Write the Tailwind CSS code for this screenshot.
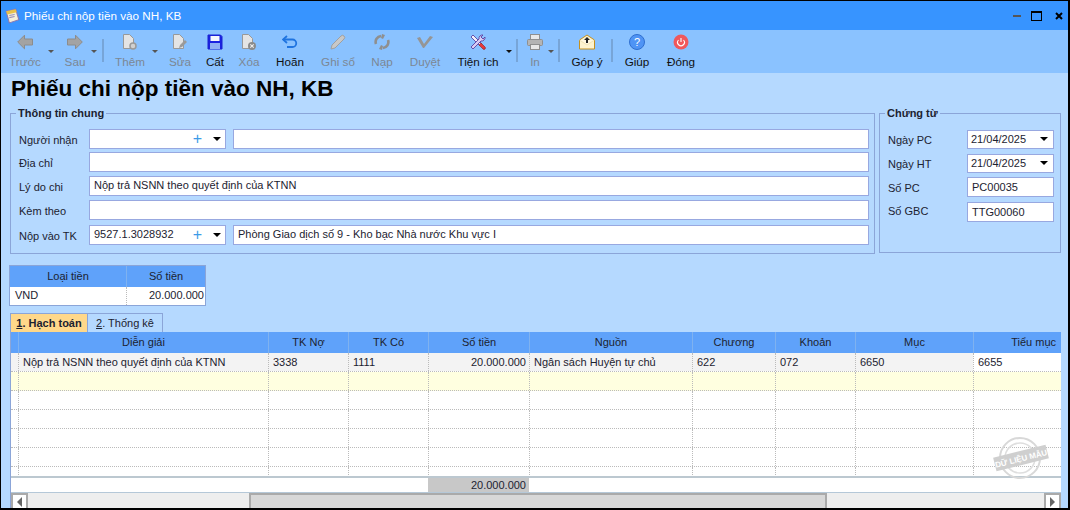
<!DOCTYPE html>
<html lang="vi">
<head>
  <meta charset="UTF-8">
  <meta name="viewport" content="width=device-width, initial-scale=1.0">
  <title>Phiếu chi nộp tiền vào NH, KB</title>
  <script src="https://cdn.jsdelivr.net/npm/@tailwindcss/browser@4"></script>
</head>
<body class="overflow-hidden">
  <div class="w-[1070px] h-[510px] flex flex-col bg-[#b5d9ff] border border-black border-r-2 border-b-2 font-['Liberation_Sans',sans-serif] text-[11px] text-[#1c2230] overflow-hidden relative">

    <!-- title bar -->
    <div class="h-[29px] shrink-0 bg-[#3794ff] flex items-center pl-[3px] text-white text-[11.7px]">
      <svg class="w-[17px] h-[17px] mr-[3px]" viewBox="0 0 16 16"><path d="M2 4l9-2 3 10-9 3z" fill="#f4efd8" stroke="#8a78b0"/><path d="M2 4l9-2 1 3-9 2z" fill="#e8c24a"/><path d="M5 8l5-1M5 10l5-1" stroke="#9a90b8"/></svg>
      <span>Phiếu chi nộp tiền vào NH, KB</span>
      <div class="ml-auto flex items-center">
        <div class="w-[8px] h-[2px] bg-[#555] mr-[10px]"></div>
        <div class="w-[11px] h-[10px] border border-black border-t-2 mr-[13px]"></div>
        <svg class="w-[8px] h-[8px] mr-[5px]" viewBox="0 0 8 8"><path d="M1 1l6 6M7 1l-6 6" stroke="#000" stroke-width="2"/></svg>
      </div>
    </div>

    <!-- toolbar -->
    <div class="h-[43px] shrink-0 bg-[#8ac2ff] flex pl-[3px] text-[11.7px]">
      <div class="w-[42px] flex flex-col items-center pt-[4px] text-[#7c8794]">
        <svg class="w-[16px] h-[16px]" viewBox="0 0 16 16"><path d="M.7 8L7.5 1.2V5h8v6h-8v3.8z" fill="#a3a3a3" stroke="#8c8c8c"/></svg>
        <span class="mt-[3px]">Trước</span>
      </div>
      <div class="w-0 h-0 mt-[20px] ml-[2px] mr-[1px] border-x-[3px] border-t-[3px] border-x-transparent border-t-[#555]"></div>
      <div class="w-[36px] ml-[2px] flex flex-col items-center pt-[4px] text-[#7c8794]">
        <svg class="w-[16px] h-[16px]" viewBox="0 0 16 16"><path d="M15.3 8L8.5 1.2V5h-8v6h8v3.8z" fill="#a3a3a3" stroke="#8c8c8c"/></svg>
        <span class="mt-[3px]">Sau</span>
      </div>
      <div class="w-0 h-0 mt-[20px] border-x-[3px] border-t-[3px] border-x-transparent border-t-[#555] -ml-[2px]"></div>
      <div class="w-[2px] h-[23px] mt-[9px] ml-[5px] bg-[#77a5d8]"></div>
      <div class="w-[40px] ml-[6px] flex flex-col items-center pt-[4px] text-[#7c8794]">
        <svg class="w-[16px] h-[16px]" viewBox="0 0 16 16"><path d="M1.5.5h6l4 4v10h-10z" fill="#e4e4e4" stroke="#999"/><circle cx="11" cy="12" r="3" fill="#d0d0d0" stroke="#999" stroke-width="1.5"/></svg>
        <span class="mt-[3px]">Thêm</span>
      </div>
      <div class="w-0 h-0 mt-[20px] ml-[2px] border-x-[3px] border-t-[3px] border-x-transparent border-t-[#555]"></div>
      <div class="w-[32px] ml-[6px] flex flex-col items-center pt-[4px] text-[#7c8794]">
        <svg class="w-[16px] h-[16px]" viewBox="0 0 16 16"><path d="M1.5.5h6l4 4v10h-10z" fill="#e4e4e4" stroke="#999"/><path d="M7 14l1-3 5-5 2 2-5 5z" fill="#9a9a9a"/></svg>
        <span class="mt-[3px]">Sửa</span>
      </div>
      <div class="w-[32px] ml-[3px] flex flex-col items-center pt-[4px] text-[#111]">
        <svg class="w-[16px] h-[16px]" viewBox="0 0 16 16"><path d="M1 1h12.5L15 2.5V15H1z" fill="#1a22e0" stroke="#1a22d0"/><rect x="3.5" y="2" width="9" height="5" fill="#f4f6fc"/><rect x="3" y="9" width="10" height="6" fill="#8fb0f5"/></svg>
        <span class="mt-[3px]">Cất</span>
      </div>
      <div class="w-[32px] ml-[2px] flex flex-col items-center pt-[4px] text-[#7c8794]">
        <svg class="w-[16px] h-[16px]" viewBox="0 0 16 16"><path d="M1.5.5h6l4 4v10h-10z" fill="#e4e4e4" stroke="#999"/><circle cx="11" cy="12" r="4" fill="#8a8a8a"/><path d="M9.3 10.3l3.4 3.4m0-3.4l-3.4 3.4" stroke="#eee" stroke-width="1.1"/></svg>
        <span class="mt-[3px]">Xóa</span>
      </div>
      <div class="w-[40px] ml-[5px] flex flex-col items-center pt-[4px] text-[#111]">
        <svg class="w-[16px] h-[16px]" viewBox="0 0 16 16"><path d="M5 2L1 5.5 5 9" fill="none" stroke="#1f74e0" stroke-width="1.8"/><path d="M1 5.5h9.5a3.7 3.7 0 0 1 0 7.5H5" fill="none" stroke="#1f74e0" stroke-width="1.8"/></svg>
        <span class="mt-[3px]">Hoãn</span>
      </div>
      <div class="w-[40px] ml-[8px] flex flex-col items-center pt-[4px] text-[#7c8794]">
        <svg class="w-[16px] h-[16px]" viewBox="0 0 16 16"><path d="M1 15l1-4 9-9a2 2 0 0 1 3 3l-9 9z" fill="#c8c8c8" stroke="#a0a0a0"/></svg>
        <span class="mt-[3px]">Ghi sổ</span>
      </div>
      <div class="w-[36px] ml-[6px] flex flex-col items-center pt-[4px] text-[#7c8794]">
        <svg class="w-[16px] h-[16px]" viewBox="0 0 16 16"><path d="M2 10a6 6 0 0 1 5-8M14 6a6 6 0 0 1-5 8" fill="none" stroke="#8f8f8f" stroke-width="2.6"/><path d="M8 0l3 1-2 4-2-1zM8 16l-3-1 2-4 2 1z" fill="#8f8f8f"/></svg>
        <span class="mt-[3px]">Nạp</span>
      </div>
      <div class="w-[40px] ml-[5px] flex flex-col items-center pt-[4px] text-[#7c8794]">
        <svg class="w-[16px] h-[16px]" viewBox="0 0 16 16"><path d="M0 4l3-1 4 7 6-8 3 1-9 11h-1z" fill="#959595"/></svg>
        <span class="mt-[3px]">Duyệt</span>
      </div>
      <div class="w-[50px] ml-[8px] flex flex-col items-center pt-[4px] text-[#111]">
        <svg class="w-[16px] h-[16px]" viewBox="0 0 16 16"><path d="M1 3l2-2 9 9-2 2z" fill="#f2f0fa" stroke="#5a3fa0" stroke-width=".9"/><path d="M9 11l2-2 4 4a1.4 1.4 0 0 1-2 2z" fill="#e8383c" stroke="#8a1c1c" stroke-width=".6"/><path d="M1 13L9 5a3.5 3.5 0 0 1 4-4l-2 2 2 2 2-2a3.5 3.5 0 0 1-4 4l-8 8z" fill="#d8ccf4" stroke="#5a3fa0" stroke-width=".9"/></svg>
        <span class="mt-[3px]">Tiện ích</span>
      </div>
      <div class="w-0 h-0 mt-[20px] ml-[3px] border-x-[3px] border-t-[3px] border-x-transparent border-t-[#111]"></div>
      <div class="w-[2px] h-[23px] mt-[9px] ml-[4px] bg-[#77a5d8]"></div>
      <div class="w-[24px] ml-[5px] flex flex-col items-center pt-[4px] text-[#7c8794]">
        <svg class="w-[16px] h-[16px]" viewBox="0 0 16 16"><rect x="3.5" y=".5" width="9" height="5" fill="#e8e8e8" stroke="#8f8f8f"/><rect x=".5" y="5.5" width="15" height="6" rx="1" fill="#b4b4b4" stroke="#8f8f8f"/><rect x="3.5" y="10.5" width="9" height="5" fill="#e8e8e8" stroke="#8f8f8f"/></svg>
        <span class="mt-[3px]">In</span>
      </div>
      <div class="w-0 h-0 mt-[20px] ml-[1px] border-x-[3px] border-t-[3px] border-x-transparent border-t-[#555]"></div>
      <div class="w-[2px] h-[23px] mt-[9px] ml-[4px] bg-[#77a5d8]"></div>
      <div class="w-[40px] ml-[7px] flex flex-col items-center pt-[4px] text-[#111]">
        <svg class="w-[16px] h-[16px]" viewBox="0 0 16 16"><path d="M.5 6L8 1l7.5 5v9H.5z" fill="#fdf3cf" stroke="#c49020"/><path d="M.5 6L8 11l7.5-5" fill="#fff8e0" stroke="#e8d8a0" stroke-width=".6"/><path d="M8 3l3 3H9v3H7V6H5z" fill="#222"/></svg>
        <span class="mt-[3px]">Góp ý</span>
      </div>
      <div class="w-[2px] h-[23px] mt-[9px] ml-[4px] bg-[#77a5d8]"></div>
      <div class="w-[36px] ml-[6px] flex flex-col items-center pt-[4px] text-[#111]">
        <div class="w-[16px] h-[16px] rounded-full bg-[#4f94f5] border border-[#2f6fd0] text-white text-[11px] leading-[14px] text-center">?</div>
        <span class="mt-[3px]">Giúp</span>
      </div>
      <div class="w-[40px] ml-[6px] flex flex-col items-center pt-[4px] text-[#111]">
        <svg class="w-[16px] h-[16px]" viewBox="0 0 16 16"><circle cx="8" cy="8" r="7.5" fill="#f0585c"/><path d="M5.5 6a3.4 3.4 0 1 0 5 0M8 4v4" fill="none" stroke="#fff" stroke-width="1.1"/></svg>
        <span class="mt-[3px]">Đóng</span>
      </div>
    </div>

    <!-- heading -->
    <h1 class="h-[34px] shrink-0 pl-[10px] font-bold text-[22.5px] leading-[32px] text-black">Phiếu chi nộp tiền vào NH, KB</h1>

    <!-- group boxes -->
    <div class="flex h-[148px] shrink-0 pl-[9px]">
      <fieldset class="w-[865px] h-[148px] border border-[#8ba5d8] pl-[8px] pr-[5px] pt-[8px] -mt-[1px]">
        <legend class="px-[2px] -ml-[3px] font-bold leading-[14px]">Thông tin chung</legend>
        <div class="flex items-center h-[21px] mb-[2px]">
          <label class="w-[70px] pt-[3px]">Người nhận</label>
          <div class="w-[137px] h-[20px] bg-white border border-[#98a8e0] flex items-center pl-[4px]">
            <span class="ml-auto text-[16px] text-[#3d9be8] mr-[11px]">+</span>
            <div class="w-0 h-0 mr-[4px] border-x-[4px] border-t-[4px] border-x-transparent border-t-black"></div>
          </div>
          <div class="w-[636px] h-[20px] ml-[7px] bg-white border border-[#98a8e0]"></div>
        </div>
        <div class="flex items-center h-[22px] mb-[2px]">
          <label class="w-[70px] pt-[3px]">Địa chỉ</label>
          <div class="w-[780px] h-[20px] bg-white border border-[#98a8e0]"></div>
        </div>
        <div class="flex items-center h-[22px] mb-[1px]">
          <label class="w-[70px] pt-[3px]">Lý do chi</label>
          <div class="w-[780px] h-[20px] bg-white border border-[#98a8e0] pl-[4px] leading-[17px]">Nộp trả NSNN theo quyết định của KTNN</div>
        </div>
        <div class="flex items-center h-[23px] mb-[3px]">
          <label class="w-[70px] pt-[3px]">Kèm theo</label>
          <div class="w-[780px] h-[20px] bg-white border border-[#98a8e0]"></div>
        </div>
        <div class="flex items-center h-[21px]">
          <label class="w-[70px] pt-[3px]">Nộp vào TK</label>
          <div class="w-[137px] h-[20px] bg-white border border-[#98a8e0] flex items-center pl-[4px]">
            <span>9527.1.3028932</span>
            <span class="ml-auto text-[16px] text-[#3d9be8] mr-[11px]">+</span>
            <div class="w-0 h-0 mr-[4px] border-x-[4px] border-t-[4px] border-x-transparent border-t-black"></div>
          </div>
          <div class="w-[636px] h-[20px] ml-[7px] bg-white border border-[#98a8e0] pl-[4px] leading-[17px]">Phòng Giao dịch số 9 - Kho bạc Nhà nước Khu vực I</div>
        </div>
      </fieldset>
      <fieldset class="w-[182px] h-[147px] ml-[4px] border border-[#8ba5d8] pl-[8px] pr-[6px] pt-[7px] -mt-[1px]">
        <legend class="px-[2px] -ml-[3px] font-bold leading-[14px]">Chứng từ</legend>
        <div class="flex items-center h-[24px]">
          <label class="w-[79px] pt-[2px]">Ngày PC</label>
          <div class="w-[87px] h-[19px] bg-white border border-[#98a8e0] flex items-center pl-[3px]">
            <span>21/04/2025</span>
            <div class="w-0 h-0 ml-auto mr-[5px] border-x-[4px] border-t-[4px] border-x-transparent border-t-black"></div>
          </div>
        </div>
        <div class="flex items-center h-[24px]">
          <label class="w-[79px] pt-[2px]">Ngày HT</label>
          <div class="w-[87px] h-[19px] bg-white border border-[#98a8e0] flex items-center pl-[3px]">
            <span>21/04/2025</span>
            <div class="w-0 h-0 ml-auto mr-[5px] border-x-[4px] border-t-[4px] border-x-transparent border-t-black"></div>
          </div>
        </div>
        <div class="flex items-center h-[24px]">
          <label class="w-[79px] pt-[2px]">Số PC</label>
          <div class="w-[87px] h-[20px] bg-white border border-[#98a8e0] pl-[4px] leading-[18px]">PC00035</div>
        </div>
        <div class="flex items-center h-[25px]">
          <label class="w-[79px]">Số GBC</label>
          <div class="w-[87px] h-[20px] bg-white border border-[#98a8e0] pl-[4px] leading-[18px]">TTG00060</div>
        </div>
      </fieldset>
    </div>

    <!-- currency grid -->
    <div class="w-[197px] h-[41px] ml-[8px] mt-[10px] shrink-0 border border-[#8ba5d8] bg-white">
      <div class="h-[21px] flex bg-[#5fa2fa] text-center leading-[20px]">
        <div class="w-[117px] border-r border-[#7fb2f0]">Loại tiền</div>
        <div class="flex-1">Số tiền</div>
      </div>
      <div class="flex h-[18px] leading-[17px]">
        <div class="w-[117px] pl-[5px] border-r border-dotted border-[#bbb]">VND</div>
        <div class="flex-1 text-right pr-[1px]">20.000.000</div>
      </div>
    </div>

    <!-- tabs -->
    <div class="flex h-[19px] ml-[9px] mt-[7px] shrink-0">
      <div class="w-[78px] bg-[#ffd88a] border border-[#8ba5d8] border-b-0 text-center font-bold leading-[18px]"><span class="underline">1</span>. Hạch toán</div>
      <div class="w-[75px] border border-l-0 border-[#8ba5d8] border-b-0 text-center leading-[18px]"><span class="underline">2</span>. Thống kê</div>
    </div>

    <!-- detail grid -->
    <div class="w-[1051px] ml-[9px] flex-1 min-h-0 flex flex-col border-l border-[#8ba5d8] bg-white relative">
      <div class="h-[21px] shrink-0 bg-[#5fa2fa] grid grid-cols-[7px_250px_80px_80px_101px_163px_83px_80px_118px_1fr] leading-[20px] text-center">
        <div></div>
        <div class="border-l border-[#7fb2f0]">Diễn giải</div>
        <div class="border-l border-[#7fb2f0]">TK Nợ</div>
        <div class="border-l border-[#7fb2f0]">TK Có</div>
        <div class="border-l border-[#7fb2f0]">Số tiền</div>
        <div class="border-l border-[#7fb2f0]">Nguồn</div>
        <div class="border-l border-[#7fb2f0]">Chương</div>
        <div class="border-l border-[#7fb2f0]">Khoản</div>
        <div class="border-l border-[#7fb2f0]">Mục</div>
        <div class="border-l border-[#7fb2f0] text-right pr-[5px] whitespace-nowrap">Tiểu mục</div>
      </div>
      <div id="rows" class="h-[123px] shrink-0 overflow-hidden"></div>
      <div class="h-[16px] shrink-0 border-t-2 border-[#bcc8d0] grid grid-cols-[417px_101px_1fr] leading-[14px]">
        <div></div>
        <div class="bg-[#c8c8c8] text-right pr-[3px]">20.000.000</div>
        <div></div>
      </div>
      <!-- scrollbar -->
      <div class="h-[17px] shrink-0 border-t border-[#b5c8d8] bg-[#eeeeee] flex">
        <div class="w-[17px] bg-white border-x-2 border-t-2 border-[#aaa] flex items-center justify-center">
          <div class="w-0 h-0 border-y-[5px] border-r-[5px] border-y-transparent border-r-[#666]"></div>
        </div>
        <div class="w-[221px]"></div>
        <div class="w-[578px] bg-[#d8d8d8] border-x-2 border-t-2 border-[#aaa]"></div>
        <div class="flex-1"></div>
        <div class="w-[17px] bg-white border-x-2 border-t-2 border-[#aaa] flex items-center justify-center">
          <div class="w-0 h-0 border-y-[5px] border-l-[5px] border-y-transparent border-l-[#666]"></div>
        </div>
      </div>

      <!-- sample data stamp -->
      <svg class="absolute left-[982px] top-[103px] w-[56px] h-[46px]" viewBox="0 0 56 46">
        <circle cx="27" cy="23" r="20" fill="none" stroke="#d8d8d8" stroke-width="2"/>
        <circle cx="27" cy="23" r="15" fill="none" stroke="#dedede" stroke-width="1.5"/>
        <g transform="rotate(-14 28 23)">
          <rect x="1" y="16" width="54" height="14" fill="#cfcfcf"/>
          <text x="28" y="26.5" text-anchor="middle" font-size="8" font-weight="bold" fill="#fff" font-family="Liberation Sans">DỮ LIỆU MẪU</text>
        </g>
      </svg>
    </div>
  </div>

  <script>
    let rowsEl = document.getElementById('rows');
    let first = ['', 'Nộp trả NSNN theo quyết định của KTNN', '3338', '1111', '20.000.000', 'Ngân sách Huyện tự chủ', '622', '072', '6650', '6655'];

    for (let r = 0; r < 7; r++) {
      let row = document.createElement('div');
      row.className = 'h-[19px] grid grid-cols-[7px_250px_80px_80px_101px_163px_83px_80px_118px_1fr] border-b border-dotted border-[#bbb] leading-[18px]';
      if (r === 1) row.classList.add('bg-[#ffffe0]');
      first.forEach(function (text, i) {
        let cell = document.createElement('div');
        cell.className = i === 0 ? '' : 'border-l border-dotted border-[#bbb] pl-[4px] whitespace-nowrap overflow-hidden';
        if (r === 0) {
          cell.textContent = text;
          if (i === 4) cell.classList.add('text-right', 'pr-[3px]');
          if (i < 9) cell.classList.add('bg-[#f3f3f3]');
        }
        row.appendChild(cell);
      });
      rowsEl.appendChild(row);
    }
  </script>
</body>
</html>
